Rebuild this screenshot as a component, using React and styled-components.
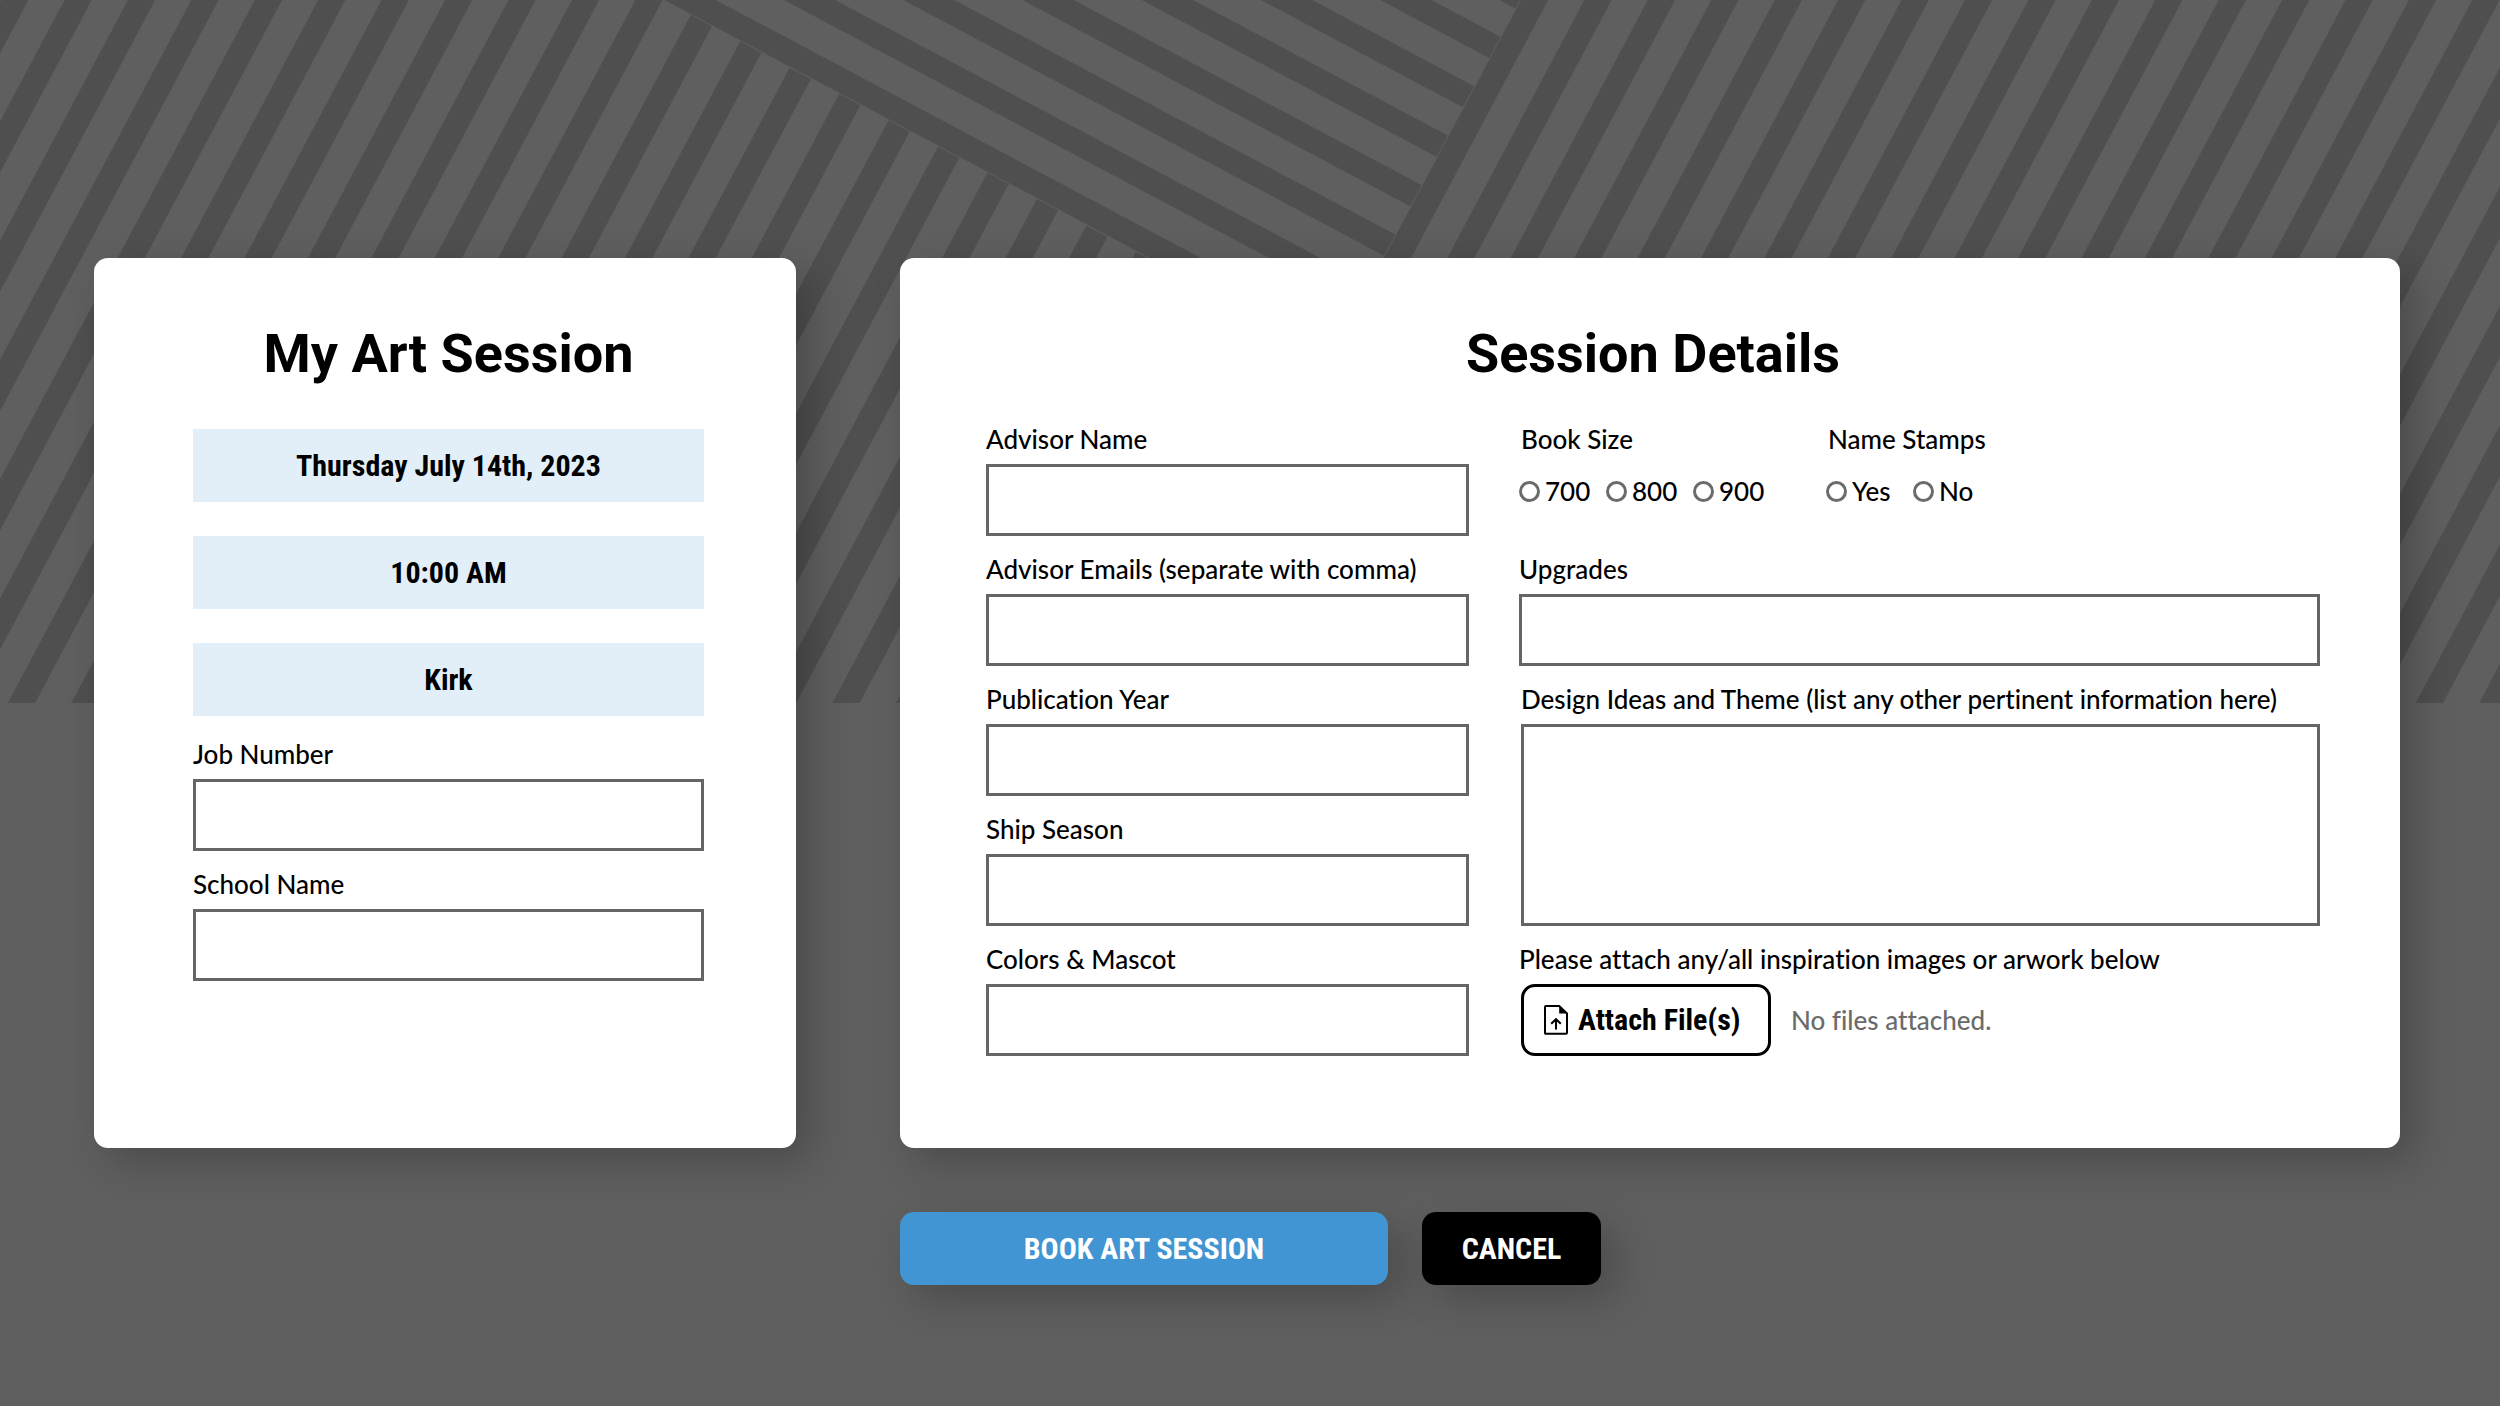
import React from 'react';
import styled, { createGlobalStyle } from 'styled-components';

const color = {
  page: '#5f5f5f',
  stripe: '#4f4f4f',
  line: '#656565',
  info: '#e2eff9',
  primary: '#4295d3',
  muted: '#6b6b6b',
};

const GlobalStyle = createGlobalStyle`
  *, *::before, *::after { box-sizing: border-box; }
  body {
    margin: 0;
    background: ${color.page};
    color: #000;
    font-family: 'Lato Medium', Lato, 'Liberation Sans', sans-serif;
    font-size: 26px;
    font-weight: 500;
    line-height: 30px;
    font-variant-ligatures: none;
  }
  input, textarea, button { font: inherit; color: inherit; }
`;

const Page = styled.div`
  display: grid;
  min-height: 100vh;
  overflow: hidden;
`;

const Backdrop = styled.svg`
  grid-area: 1 / 1;
  display: block;
  width: 100%;
  height: auto;
  align-self: start;
`;

const Layout = styled.form`
  grid-area: 1 / 1;
  align-self: start;
  display: grid;
  grid-template-columns: 702fr 1500fr;
  gap: 64px 104px;
  padding: 258px 100px 64px 94px;
`;

const Card = styled.section`
  padding: 64px 80px 92px 86px;
  padding-inline: ${(p) => (p.$narrow ? '99px 92px' : '86px 80px')};
  border-radius: 14px;
  background: #fff;
  box-shadow: 14px 14px 40px rgba(0, 0, 0, 0.22);
`;

const Title = styled.h2`
  margin: 0;
  font-family: Roboto, 'Liberation Sans', sans-serif;
  font-size: 54px;
  line-height: 64px;
  font-weight: 700;
  text-align: center;
`;

const SessionBody = styled.div`
  display: flex;
  flex-direction: column;
  gap: 18px;
  padding-top: 43px;
`;

const InfoList = styled.div`
  display: flex;
  flex-direction: column;
  gap: 34px;
  padding-bottom: 5px;
`;

const Info = styled.div`
  display: flex;
  align-items: center;
  justify-content: center;
  height: 73px;
  background: ${color.info};
  font-family: 'Roboto Condensed', Roboto, sans-serif;
  font-size: 30px;
  font-weight: 700;
`;

const DetailsBody = styled.div`
  display: grid;
  grid-template-columns: 483fr 801fr;
  column-gap: 50px;
  padding-top: 38px;
`;

const Stack = styled.div`
  display: flex;
  flex-direction: column;
  gap: 18px;
`;

const FieldBox = styled.div`
  display: flex;
  flex-direction: column;
  gap: 10px;
  padding-left: ${(p) => (p.$indent ? 2 : 0)}px;
`;

const Label = styled.label`
  display: block;
`;

const TextInput = styled.input`
  width: 100%;
  height: 72px;
  padding: 0 16px;
  border: 3px solid ${color.line};
  border-radius: 0;
  background: #fff;
`;

const TextArea = styled.textarea`
  display: block;
  width: 100%;
  height: 202px;
  padding: 16px;
  border: 3px solid ${color.line};
  border-radius: 0;
  background: #fff;
  resize: none;
`;

const ChoiceRow = styled.div`
  display: flex;
  gap: 46px;
`;

const ChoiceGroup = styled.div`
  display: flex;
  flex-direction: column;
  gap: 10px;
`;

const GroupLabel = styled.span`
  padding-left: 2px;
`;

const Choices = styled.div`
  display: flex;
  height: 72px;
  padding-bottom: 18px;
`;

const Choice = styled.label`
  display: flex;
  align-items: center;
  gap: 5px;
  width: 87px;
`;

const Radio = styled.input`
  appearance: none;
  flex: none;
  width: 21px;
  height: 21px;
  margin: 0;
  border: 3px solid ${color.muted};
  border-radius: 50%;
  &:checked { background: ${color.primary}; }
`;

const AttachRow = styled.div`
  display: flex;
  align-items: center;
  gap: 20px;
  padding-left: 2px;
`;

const AttachButton = styled.button`
  display: flex;
  align-items: center;
  gap: 10px;
  width: 250px;
  height: 72px;
  padding: 0 20px;
  border: 3px solid #000;
  border-radius: 14px;
  background: #fff;
  font-family: 'Roboto Condensed', Roboto, sans-serif;
  font-size: 30px;
  font-weight: 700;
  white-space: nowrap;
`;

const Note = styled.span`
  color: ${color.muted};
`;

const Actions = styled.div`
  grid-column: 2;
  display: flex;
  gap: 34px;
`;

const ActionButton = styled.button`
  width: ${(p) => (p.$primary ? 488 : 179)}px;
  height: 73px;
  border: 0;
  border-radius: 14px;
  background: ${(p) => (p.$primary ? color.primary : '#000')};
  color: #fff;
  font-family: 'Roboto Condensed', Roboto, sans-serif;
  font-size: 30px;
  font-weight: 700;
  box-shadow: 14px 14px 40px rgba(0, 0, 0, 0.22);
`;

const PITCH = 56;
const BAR = 24;
const range = (n) => Array.from({ length: n }, (_, i) => i);

// Three fields of stripes, drawn upright and turned together by 28 degrees.
function Stripes() {
  return (
    <Backdrop viewBox="0 0 2500 703" aria-hidden="true">
      <g transform="rotate(28)" fill={color.stripe}>
        {range(30).map((i) => (
          <rect key={`left${i}`} x={57 + PITCH * (i - 7)} y={-311} width={BAR} height={1100} />
        ))}
        {range(16).map((i) => (
          <rect key={`middle${i}`} x={200} y={-336 - PITCH * i} width={1142} height={BAR} />
        ))}
        {range(24).map((i) => (
          <rect key={`right${i}`} x={1343 + PITCH * i} y={-1250} width={BAR} height={1900} />
        ))}
      </g>
    </Backdrop>
  );
}

function FileUpIcon() {
  return (
    <svg width="24" height="30" viewBox="0 0 24 30" fill="none" stroke="#000" strokeWidth="2" aria-hidden="true">
      <path d="M1.9 1H15.2L23 8.4V27.8a1 1 0 0 1-1 1H1.9a.9.9 0 0 1-.9-.9V1.9A.9.9 0 0 1 1.9 1Z" />
      <path d="M15.2 .8V8.4H23.2Z" fill="#000" stroke="none" />
      <path d="M12 24.5V14.5M7.2 18.8 12 14.2l4.8 4.6" />
    </svg>
  );
}

function Field({ id, label, type = 'text' }) {
  return (
    <FieldBox>
      <Label htmlFor={id}>{label}</Label>
      <TextInput id={id} name={id} type={type} />
    </FieldBox>
  );
}

function RadioGroup({ id, label, options }) {
  return (
    <ChoiceGroup role="radiogroup" aria-labelledby={`${id}-label`}>
      <GroupLabel id={`${id}-label`}>{label}</GroupLabel>
      <Choices>
        {options.map((option) => (
          <Choice key={option}>
            <Radio type="radio" name={id} value={option} />
            {option}
          </Choice>
        ))}
      </Choices>
    </ChoiceGroup>
  );
}

export default function App() {
  return (
    <>
      <GlobalStyle />
      <Page>
        <Stripes />
        <Layout onSubmit={(e) => e.preventDefault()}>
          <Card $narrow>
            <Title>My Art Session</Title>
            <SessionBody>
              <InfoList>
                <Info>Thursday July 14th, 2023</Info>
                <Info>10:00 AM</Info>
                <Info>Kirk</Info>
              </InfoList>
              <Field id="job-number" label="Job Number" />
              <Field id="school-name" label="School Name" />
            </SessionBody>
          </Card>

          <Card>
            <Title>Session Details</Title>
            <DetailsBody>
              <Stack>
                <Field id="advisor-name" label="Advisor Name" />
                <Field id="advisor-emails" label="Advisor Emails (separate with comma)" />
                <Field id="publication-year" label="Publication Year" />
                <Field id="ship-season" label="Ship Season" />
                <Field id="colors-mascot" label="Colors &amp; Mascot" />
              </Stack>
              <Stack>
                <ChoiceRow>
                  <RadioGroup id="book-size" label="Book Size" options={['700', '800', '900']} />
                  <RadioGroup id="name-stamps" label="Name Stamps" options={['Yes', 'No']} />
                </ChoiceRow>
                <Field id="upgrades" label="Upgrades" />
                <FieldBox $indent>
                  <Label htmlFor="design-ideas">
                    Design Ideas and Theme (list any other pertinent information here)
                  </Label>
                  <TextArea id="design-ideas" name="design-ideas" />
                </FieldBox>
                <FieldBox>
                  <span id="attach-hint">Please attach any/all inspiration images or arwork below</span>
                  <AttachRow>
                    <AttachButton type="button" aria-describedby="attach-hint">
                      <FileUpIcon />
                      Attach File(s)
                    </AttachButton>
                    <Note>No files attached.</Note>
                  </AttachRow>
                </FieldBox>
              </Stack>
            </DetailsBody>
          </Card>

          <Actions>
            <ActionButton $primary type="submit">BOOK ART SESSION</ActionButton>
            <ActionButton type="button">CANCEL</ActionButton>
          </Actions>
        </Layout>
      </Page>
    </>
  );
}
